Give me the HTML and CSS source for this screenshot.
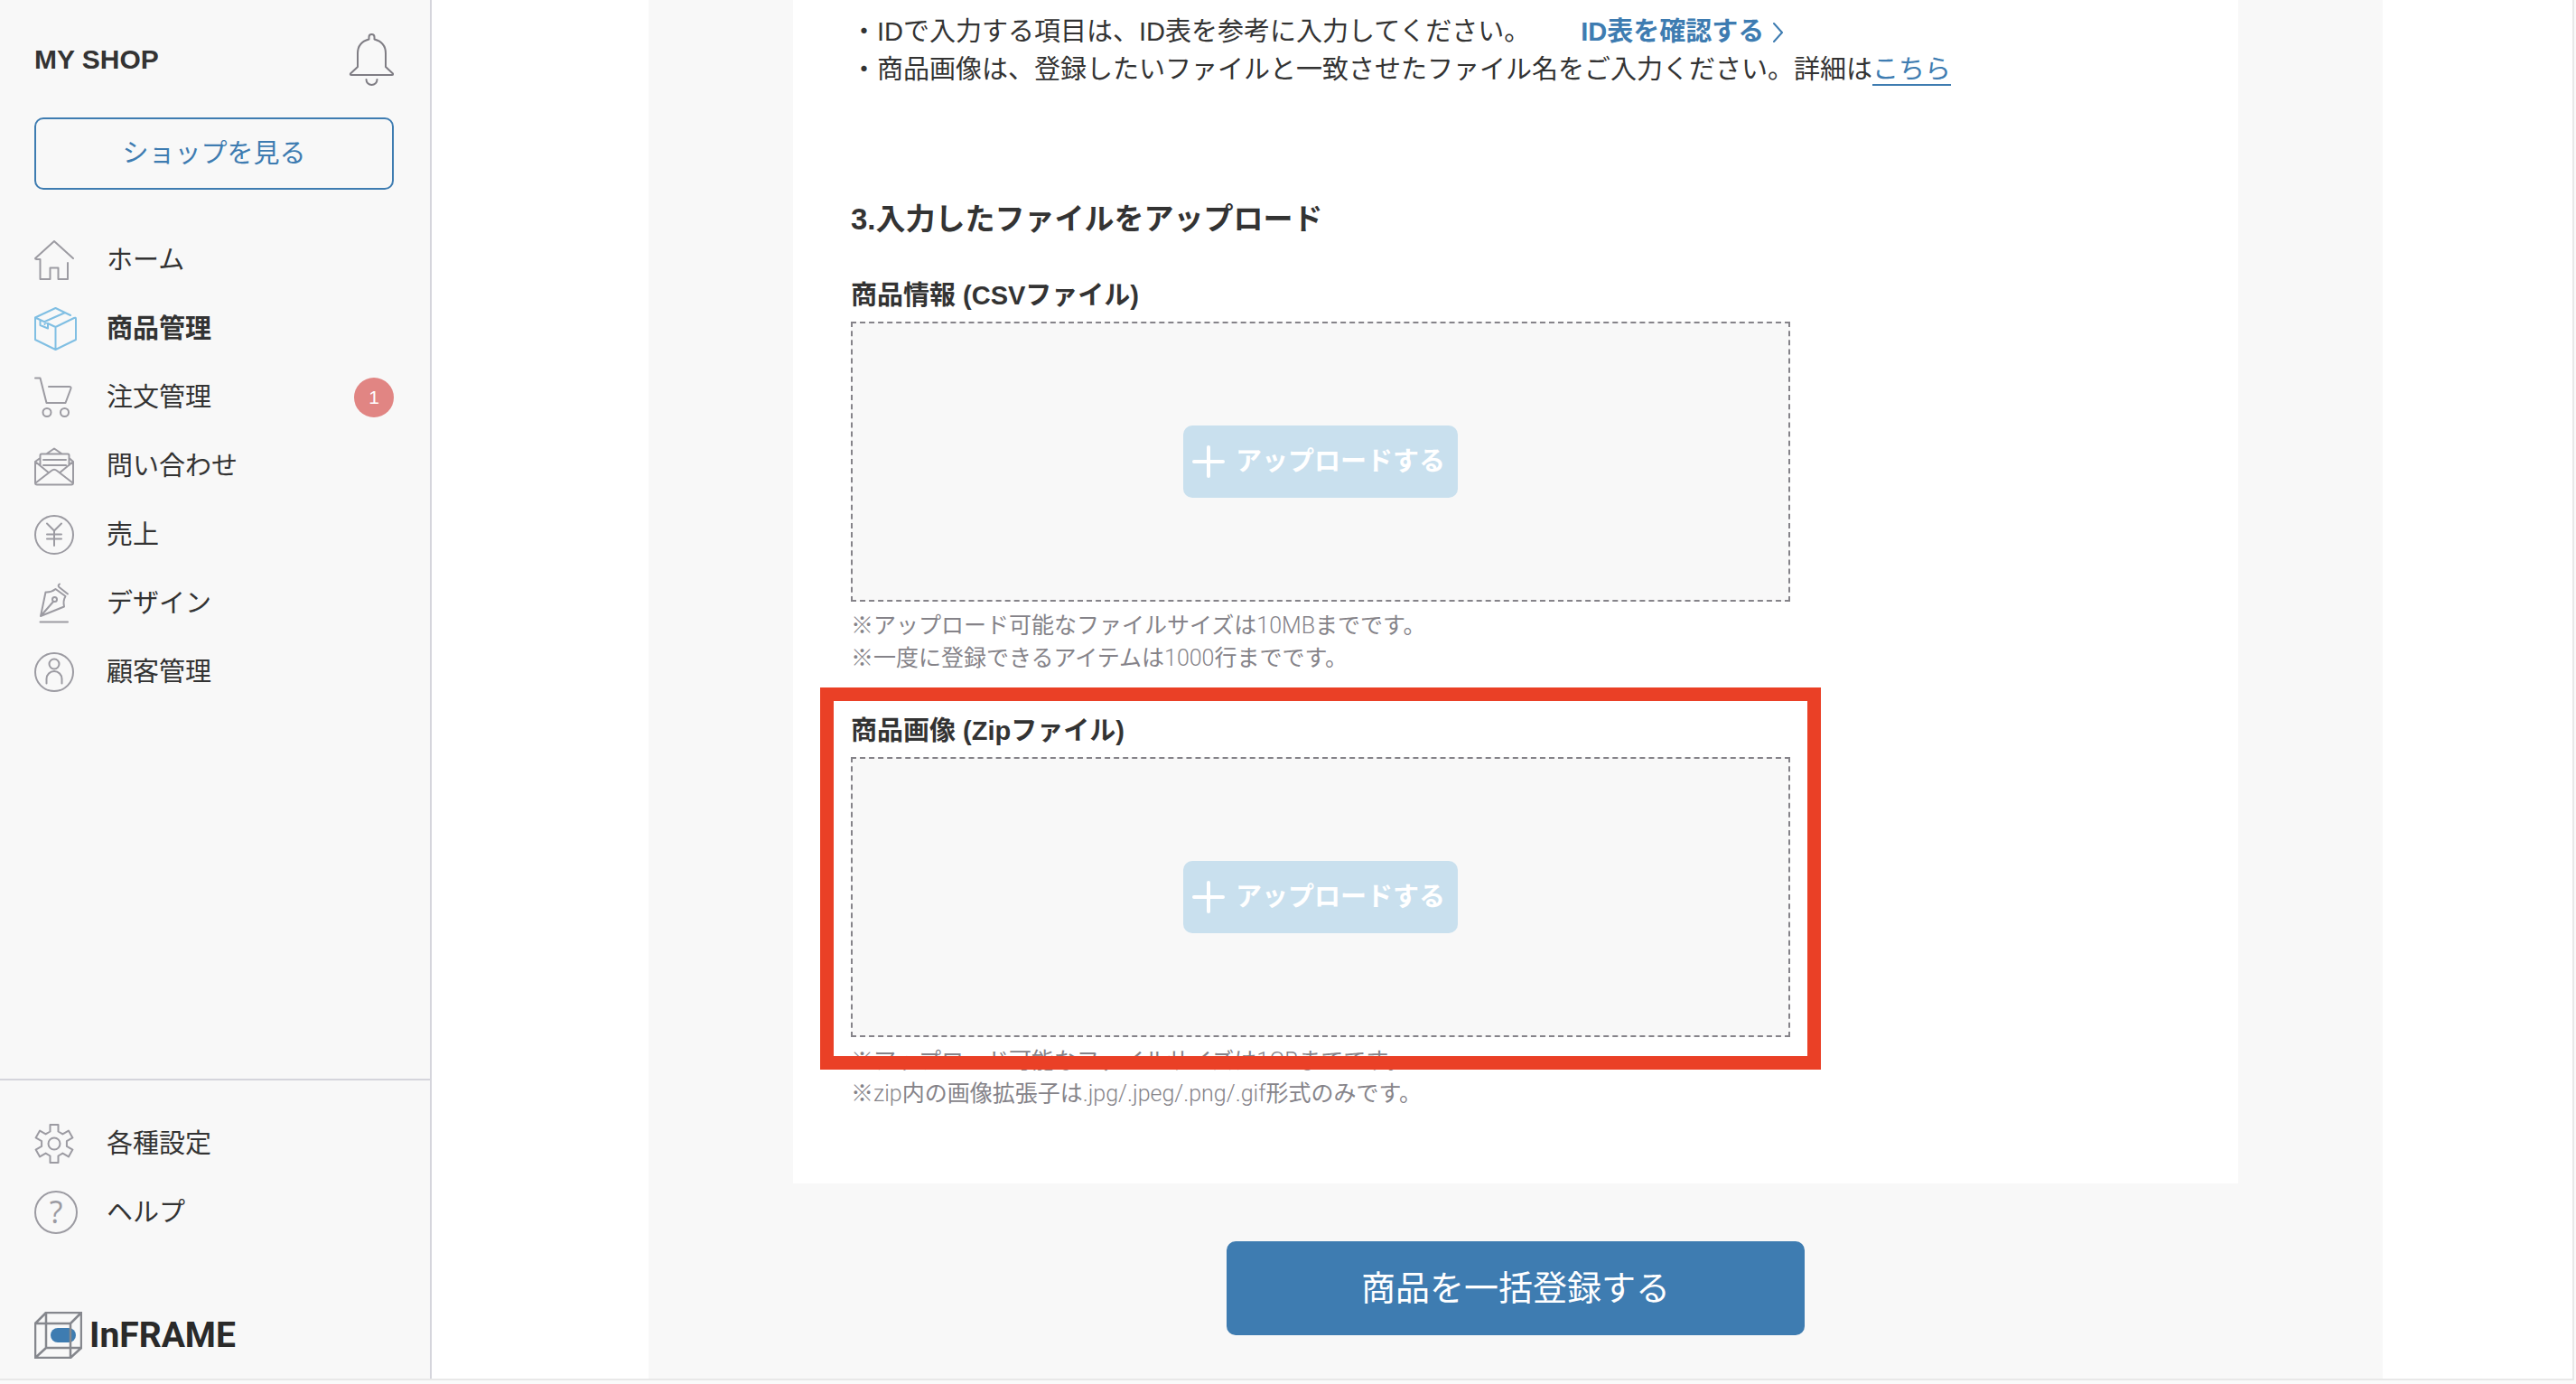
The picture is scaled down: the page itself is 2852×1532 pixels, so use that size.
FILE: index.html
```html
<!DOCTYPE html>
<html lang="ja">
<head>
    <meta charset="UTF-8">
    <meta name="viewport" content="width=device-width, initial-scale=1.0">
    <title>商品一括登録 | MY SHOP</title>
    <link rel="stylesheet" href="styles.css">
</head>
<body>
    <div class="app">
        <aside class="sidebar">
            <div class="sidebar-header">
                <h1 class="shop-name">MY SHOP</h1>
                <button class="bell" type="button" aria-label="お知らせ">
                    <svg width="50" height="58" viewBox="0 0 50 58">
                        <path d="M22.5 6.5V4a3 3 0 0 1 6 0v2.500C36 8.500 41 14 41 22v15l8 7.500q.5 1.500-1 1.500H3q-1.500 0-1-1.500L10 37V22C10 14 15 8.500 22.500 6.500"/>
                        <path d="M19.500 51a6 6 0 0 0 12 0"/>
                    </svg>
                </button>
            </div>

            <a class="shop-link" href="#">ショップを見る</a>

            <nav class="nav">
                <a class="nav-item" href="#">
                    <svg class="icon" width="44" height="44" viewBox="0 0 44 44">
                        <path d="M43 20L22 1 1 20q0 1 1.500 1h4v22h11V30.500h9V43H37V25"/>
                    </svg>
                    <span>ホーム</span>
                </a>
                <a class="nav-item active" href="#">
                    <svg class="icon" width="48" height="48" viewBox="0 0 48 48">
                        <path d="M40 9L23.500 1 1 11.500V36l22.500 11L46 36V13q0-2-2-1L23.500 22 1 11.500M23.500 22v25M33 6.500L11.500 16v3M6.500 14.500V20l8.500 3.500V19"/>
                    </svg>
                    <span>商品管理</span>
                </a>
                <a class="nav-item" href="#">
                    <svg class="icon" width="44" height="46" viewBox="0 0 44 46">
                        <path d="M1 1.500h5.500L13.500 29h21l6-16q.5-2-2-2H16"/>
                        <circle cx="14" cy="39.500" r="4.500"/>
                        <circle cx="33.500" cy="39.500" r="4.500"/>
                    </svg>
                    <span>注文管理</span>
                    <span class="badge">1</span>
                </a>
                <a class="nav-item" href="#">
                    <svg class="icon" width="44" height="46" viewBox="0 0 44 46">
                        <path d="M14 9l8-5.500L30 9M6.500 22V11q0-1.500 1.500-1.500h29q1.500 0 1.500 1.500v11M6.500 14L1 18v23.500q0 2 2 2h38q2 0 2-2V18l-4.500-4M1 18l14 11.500M43 18L29 29.500M1.500 41.500L19 28q3-2.500 6 0l17.500 13.500M10 16h25M10 22h25"/>
                    </svg>
                    <span>問い合わせ</span>
                </a>
                <a class="nav-item" href="#">
                    <svg class="icon" width="44" height="44" viewBox="0 0 44 44">
                        <circle cx="22" cy="22" r="21"/>
                        <path d="M14 9.500l8 8 8-8M22 17.500V34M14 21.500h16M14 26.500h16"/>
                    </svg>
                    <span>売上</span>
                </a>
                <a class="nav-item" href="#">
                    <svg class="icon" width="44" height="46" viewBox="0 0 44 46">
                        <path d="M7 37l5.500-26.500q6 .5 11-3.500L34.500 15q-3 5-1.500 11.500zM7 37l14-16M28 1.500q-2.500 1.500-.5 3.500L37 12.500M6.500 43.500H37"/>
                        <circle cx="22.500" cy="18.500" r="2.500"/>
                    </svg>
                    <span>デザイン</span>
                </a>
                <a class="nav-item" href="#">
                    <svg class="icon" width="44" height="44" viewBox="0 0 44 44">
                        <circle cx="22" cy="22" r="21"/>
                        <circle cx="22" cy="13" r="5.500"/>
                        <path d="M13.500 34.500v-5a8.500 8.500 0 0 1 17 0v5"/>
                    </svg>
                    <span>顧客管理</span>
                </a>
            </nav>

            <div class="sidebar-footer">
                <a class="nav-item" href="#">
                    <svg class="icon" width="44" height="44" viewBox="0 0 44 44">
                        <path d="M17.500 8.500V1h9v7.500l4.900 2.900 6.500-3.800 4.500 7.800-6.500 3.700v5.800l6.500 3.700-4.500 7.800-6.500-3.800-4.900 2.900V43h-9v-7.500l-4.900-2.900-6.500 3.800-4.500-7.800 6.500-3.700v-5.800l-6.500-3.700 4.500-7.800 6.500 3.800z"/>
                        <circle cx="22" cy="22" r="6.500"/>
                    </svg>
                    <span>各種設定</span>
                </a>
                <a class="nav-item" href="#">
                    <svg class="icon" width="48" height="48" viewBox="0 0 48 48">
                        <circle cx="24" cy="24" r="23"/>
                        <text class="icon-text" x="24" y="36" text-anchor="middle">?</text>
                    </svg>
                    <span>ヘルプ</span>
                </a>
                <div class="logo">
                    <svg width="53" height="52" viewBox="0 0 53 52">
                        <rect class="logo-pill" x="18" y="18" width="28" height="16" rx="8"/>
                        <path class="logo-frame" d="M1 13h39v38H1zM13 1h39v39H13zM1 13L13 1M40 13L52 1M1 51l12-11M40 51l12-11"/>
                    </svg>
                    <span>InFRAME</span>
                </div>
            </div>
        </aside>

        <main class="main">
            <div class="content">
                <div class="card">
                    <ul class="notice">
                        <li>・IDで入力する項目は、ID表を参考に入力してください。<a class="id-link" href="#">ID表を確認する<svg width="12" height="22" viewBox="0 0 12 22"><path d="M1 1l9 10-9 10"/></svg></a></li>
                        <li>・商品画像は、登録したいファイルと一致させたファイル名をご入力ください。詳細は<a class="text-link" href="#">こちら</a></li>
                    </ul>

                    <h2 class="step-title">3.入力したファイルをアップロード</h2>

                    <section class="field">
                        <h3 class="field-title" id="csv-title">商品情報 (CSVファイル)</h3>
                        <div class="dropzone">
                            <button class="upload-button" type="button" aria-describedby="csv-title">
                                <svg width="36" height="36" viewBox="0 0 36 36"><path d="M18 2v32M2 18h32"/></svg>
                                アップロードする
                            </button>
                        </div>
                        <p class="note"><span class="note-mark">※</span>アップロード可能なファイルサイズは10MBまでです。</p>
                        <p class="note"><span class="note-mark">※</span>一度に登録できるアイテムは1000行までです。</p>
                    </section>

                    <section class="field marked">
                        <h3 class="field-title" id="zip-title">商品画像 (Zipファイル)</h3>
                        <div class="dropzone">
                            <button class="upload-button" type="button" aria-describedby="zip-title">
                                <svg width="36" height="36" viewBox="0 0 36 36"><path d="M18 2v32M2 18h32"/></svg>
                                アップロードする
                            </button>
                        </div>
                        <p class="note"><span class="note-mark">※</span>アップロード可能なファイルサイズは1GBまでです。</p>
                        <p class="note"><span class="note-mark">※</span>zip内の画像拡張子は.jpg/.jpeg/.png/.gif形式のみです。</p>
                    </section>
                </div>

                <button class="submit-button" type="submit">商品を一括登録する</button>
            </div>
        </main>
    </div>
</body>
</html>
```
FILE: styles.css
```css
* {
    margin: 0;
    padding: 0;
    box-sizing: border-box;
}

body {
    font-family: "Liberation Sans", "Noto Sans CJK JP", sans-serif;
    font-size: 29px;
    line-height: 42px;
    color: #333;
    background: #fafafa;
    min-height: 100vh;
    padding: 0 2px 4px 0;
    display: flex;
}

a {
    color: inherit;
    text-decoration: none;
}

button {
    font: inherit;
    border: none;
    cursor: pointer;
}

svg {
    fill: none;
    stroke: currentColor;
    stroke-width: 2;
    stroke-linecap: round;
    stroke-linejoin: round;
    flex-shrink: 0;
}

.app {
    flex: 1;
    display: flex;
    background: #fff;
    border-right: 2px solid #e8e8e8;
    border-bottom: 2px solid #e8e8e8;
}

/* sidebar */
.sidebar {
    width: 478px;
    flex-shrink: 0;
    display: flex;
    flex-direction: column;
    background: #f8f8f8;
    border-right: 2px solid #d5d5dc;
}

.sidebar-header {
    display: flex;
    justify-content: space-between;
    align-items: center;
    padding: 37px 40px 35px 38px;
}

.shop-name {
    font-size: 30px;
}

.bell {
    display: flex;
    background: none;
    color: #7f7d84;
}

.shop-link {
    height: 80px;
    margin: 0 40px 40px 38px;
    display: flex;
    align-items: center;
    justify-content: center;
    color: #3e7cb1;
    border: 2px solid #3e7cb1;
    border-radius: 10px;
}

.nav-item {
    display: flex;
    align-items: center;
    height: 76px;
    padding: 0 40px 0 38px;
}

.icon {
    color: #9c9ba2;
}

.nav-item .icon + span {
    margin-left: 36px;
}

.nav-item .icon[width="48"] + span {
    margin-left: 32px;
}

.nav-item.active {
    font-weight: bold;
}

.nav-item.active .icon {
    color: #80bfe3;
}

.icon-text {
    font-family: "Open Sans", sans-serif;
    font-size: 34px;
    fill: #9c9ba2;
    stroke: none;
}

.badge {
    width: 44px;
    height: 44px;
    margin-left: auto;
    display: flex;
    align-items: center;
    justify-content: center;
    font-size: 21px;
    color: #fff;
    background: #e18583;
    border-radius: 50%;
}

.sidebar-footer {
    margin-top: auto;
    padding: 32px 0 22px;
    border-top: 2px solid #d5d5dc;
}

.logo {
    display: flex;
    align-items: center;
    gap: 8px;
    padding: 0 38px;
    margin-top: 72px;
    font-family: Roboto, sans-serif;
    font-size: 39px;
    font-weight: bold;
    line-height: 52px;
    color: #2a2a2a;
}

.logo-pill {
    fill: #3e7cb1;
    stroke: none;
}

.logo-frame {
    stroke: #85878d;
    stroke-width: 2.5;
    stroke-linejoin: miter;
}

/* main column */
.main {
    flex: 1;
    min-width: 0;
    display: flex;
    padding: 0 210px 0 240px;
}

.content {
    flex: 1;
    display: flex;
    flex-direction: column;
    align-items: center;
    padding: 0 160px 48px;
    background: #f8f8f8;
}

.card {
    width: 100%;
    padding: 14px 64px 81px;
    background: #fff;
}

.notice {
    list-style: none;
}

.id-link {
    margin-left: 56px;
    font-weight: bold;
    color: #3e7cb1;
}

.id-link svg {
    margin-left: 10px;
    vertical-align: -2px;
}

.text-link {
    color: #3e7cb1;
    border-bottom: 2px solid #3e7cb1;
}

.step-title {
    margin: 120px 0 38px;
    font-size: 33px;
    line-height: 50px;
}

.field {
    position: relative;
    max-width: 1040px;
}

.field + .field {
    margin-top: 41px;
}

.field-title {
    margin-bottom: 8px;
    font-size: 29px;
}

.dropzone {
    height: 310px;
    margin-bottom: 9px;
    display: flex;
    align-items: center;
    justify-content: center;
    background: #f8f8f8;
    border: 2px dashed #858389;
}

.upload-button {
    height: 80px;
    padding: 0 14px 0 10px;
    display: flex;
    align-items: center;
    gap: 12px;
    font-weight: bold;
    color: #fff;
    background: #c9e0ee;
    border-radius: 10px;
}

.upload-button svg {
    stroke-width: 4;
}

.note {
    font-family: "Roboto Light", "Noto Sans CJK JP", sans-serif;
    font-size: 25px;
    line-height: 36px;
    color: #858389;
}

.note-mark {
    font-family: "Noto Sans CJK JP", sans-serif;
    line-height: 1;
}

/* red frame around the zip upload */
.marked::after {
    content: '';
    position: absolute;
    top: -27px;
    right: -34px;
    bottom: 45px;
    left: -34px;
    border: 15px solid #ea4026;
    pointer-events: none;
}

.submit-button {
    width: 100%;
    max-width: 640px;
    height: 104px;
    margin-top: 64px;
    font-size: 38px;
    color: #fff;
    background: #3e7cb1;
    border-radius: 10px;
}
```
